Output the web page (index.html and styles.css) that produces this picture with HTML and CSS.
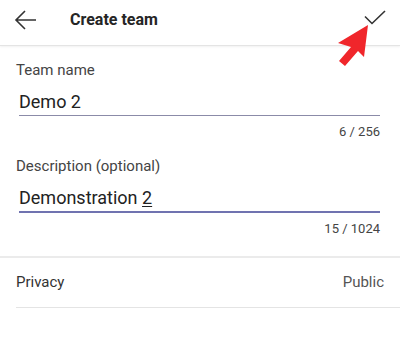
FILE: index.html
```html
<!DOCTYPE html>
<html lang="en">
<head>
    <meta charset="UTF-8">
    <meta name="viewport" content="width=device-width, initial-scale=1.0">
    <title>Create team</title>
    <link rel="stylesheet" href="styles.css">
</head>
<body>
    <div class="screen">
        <div class="topbar">
            <svg class="back" width="24" height="24" viewBox="0 0 24 24">
                <path d="M22 12H2M11 3L2 12l9 9" fill="none" stroke="#333" stroke-width="1.6"/>
            </svg>
            <h1>Create team</h1>
            <svg class="check" width="22" height="16" viewBox="0 0 22 16">
                <path d="M1 6.5l7 7L21 1" fill="none" stroke="#333" stroke-width="1.6"/>
            </svg>
        </div>

        <!-- annotation arrow -->
        <svg class="pointer" width="40" height="50" viewBox="0 0 40 50">
            <polygon points="30,0 26,32 20,26 7,41 1,36 13,22 0,18" fill="#f0262b"/>
        </svg>

        <div class="form">
            <div class="field">
                <label>Team name</label>
                <div class="value">Demo 2</div>
                <div class="counter">6 / 256</div>
            </div>
            <div class="field">
                <label>Description (optional)</label>
                <div class="value active">Demonstration <u>2</u></div>
                <div class="counter">15 / 1024</div>
            </div>
        </div>

        <div class="row">
            <span>Privacy</span>
            <span class="muted">Public</span>
        </div>
    </div>
</body>
</html>
```

FILE: styles.css
```css
* {
    margin: 0;
    padding: 0;
    box-sizing: border-box;
    font-family: 'Roboto', 'Liberation Sans', sans-serif;
}
body {
    background: #fff;
    width: 400px;
    height: 344px;
    overflow: hidden;
}
.screen {
    position: relative;
}
.topbar {
    height: 46px;
    display: flex;
    align-items: center;
    padding: 0 14px 0 14px;
    border-bottom: 1px solid #e4e4e4;
    box-shadow: 0 1px 2px rgba(0, 0, 0, 0.06);
}
.topbar .back {
    margin-top: -6px;
}
.topbar h1 {
    flex: 1;
    font-size: 16px;
    font-weight: 700;
    color: #252525;
    margin-left: 32px;
    margin-top: -7px;
}
.topbar .check {
    margin-top: -10px;
}
.pointer {
    position: absolute;
    left: 338px;
    top: 25px;
}
.form {
    padding: 14px 20px 0 16px;
}
.field label {
    display: block;
    font-size: 15px;
    line-height: 20px;
    color: #444;
}
.field .value {
    margin: 10px 0 0 3px;
    font-size: 18px;
    line-height: 24px;
    color: #222;
    padding-bottom: 1px;
    border-bottom: 1px solid #8b8ba8;
}
.field .value.active {
    border-bottom: 2px solid #7073b0;
}
.field .value u {
    text-underline-offset: 2px;
}
.counter {
    text-align: right;
    font-size: 13px;
    line-height: 18px;
    margin-top: 7px;
    color: #444;
}
.field + .field {
    margin-top: 15px;
}
.row {
    margin-top: 18px;
    border-top: 2px solid #ebebeb;
    display: flex;
    justify-content: space-between;
    align-items: center;
    height: 52px;
    padding: 0 16px 3px;
    font-size: 15px;
    color: #333;
    position: relative;
}
.row::after {
    content: "";
    position: absolute;
    left: 16px;
    right: 0;
    bottom: 0;
    border-bottom: 1px solid #e4e4e4;
}
.row .muted {
    color: #555;
}
```
